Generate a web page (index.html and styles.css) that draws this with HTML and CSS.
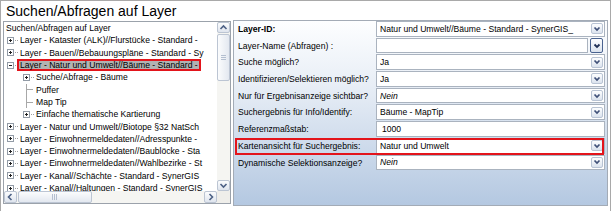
FILE: index.html
```html
<!DOCTYPE html>
<html>
<head>
<meta charset="utf-8">
<title>Suchen/Abfragen auf Layer</title>
<link rel="stylesheet" href="styles.css">
</head>
<body>
<div class="win">
  <div class="title">Suchen/Abfragen auf Layer</div>
  <div class="main">
    <div class="tree">
      <div class="tree-list">
        <div class="node root">Suchen/Abfragen auf Layer</div>
        <div class="node l1"><svg class="exp" width="12" height="7" viewBox="0 0 12 7"><rect x="0.5" y="0.5" width="6" height="6" fill="#fff" stroke="#929ba6"/><rect x="2" y="3" width="3" height="1" fill="#222"/><rect x="3" y="2" width="1" height="3" fill="#222"/><rect x="8" y="3" width="1" height="1" fill="#a0a0a0"/><rect x="10" y="3" width="1" height="1" fill="#a0a0a0"/></svg><span class="tx">Layer - Kataster (ALK)//Flurstücke - Standard -</span></div>
        <div class="node l1"><svg class="exp" width="12" height="7" viewBox="0 0 12 7"><rect x="0.5" y="0.5" width="6" height="6" fill="#fff" stroke="#929ba6"/><rect x="2" y="3" width="3" height="1" fill="#222"/><rect x="3" y="2" width="1" height="3" fill="#222"/><rect x="8" y="3" width="1" height="1" fill="#a0a0a0"/><rect x="10" y="3" width="1" height="1" fill="#a0a0a0"/></svg><span class="tx">Layer - Bauen//Bebauungspläne - Standard - Sy</span></div>
        <div class="node l1"><svg class="exp" width="12" height="7" viewBox="0 0 12 7"><rect x="0.5" y="0.5" width="6" height="6" fill="#fff" stroke="#929ba6"/><rect x="2" y="3" width="3" height="1" fill="#222"/><rect x="8" y="3" width="1" height="1" fill="#a0a0a0"/><rect x="10" y="3" width="1" height="1" fill="#a0a0a0"/></svg><span class="selbox">Layer - Natur und Umwelt//Bäume - Standard -</span></div>
        <div class="node l2"><svg class="exp" width="12" height="7" viewBox="0 0 12 7"><rect x="0.5" y="0.5" width="6" height="6" fill="#fff" stroke="#929ba6"/><rect x="2" y="3" width="3" height="1" fill="#222"/><rect x="3" y="2" width="1" height="3" fill="#222"/><rect x="8" y="3" width="1" height="1" fill="#a0a0a0"/><rect x="10" y="3" width="1" height="1" fill="#a0a0a0"/></svg><span class="tx">Suche/Abfrage - Bäume</span></div>
        <div class="node l2"><span class="ln"></span><span class="tx">Puffer</span></div>
        <div class="node l2"><span class="ln"></span><span class="tx">Map Tip</span></div>
        <div class="node l2"><svg class="exp" width="12" height="7" viewBox="0 0 12 7"><rect x="0.5" y="0.5" width="6" height="6" fill="#fff" stroke="#929ba6"/><rect x="2" y="3" width="3" height="1" fill="#222"/><rect x="3" y="2" width="1" height="3" fill="#222"/><rect x="8" y="3" width="1" height="1" fill="#a0a0a0"/><rect x="10" y="3" width="1" height="1" fill="#a0a0a0"/></svg><span class="tx">Einfache thematische Kartierung</span></div>
        <div class="node l1"><svg class="exp" width="12" height="7" viewBox="0 0 12 7"><rect x="0.5" y="0.5" width="6" height="6" fill="#fff" stroke="#929ba6"/><rect x="2" y="3" width="3" height="1" fill="#222"/><rect x="3" y="2" width="1" height="3" fill="#222"/><rect x="8" y="3" width="1" height="1" fill="#a0a0a0"/><rect x="10" y="3" width="1" height="1" fill="#a0a0a0"/></svg><span class="tx">Layer - Natur und Umwelt//Biotope §32 NatSch</span></div>
        <div class="node l1"><svg class="exp" width="12" height="7" viewBox="0 0 12 7"><rect x="0.5" y="0.5" width="6" height="6" fill="#fff" stroke="#929ba6"/><rect x="2" y="3" width="3" height="1" fill="#222"/><rect x="3" y="2" width="1" height="3" fill="#222"/><rect x="8" y="3" width="1" height="1" fill="#a0a0a0"/><rect x="10" y="3" width="1" height="1" fill="#a0a0a0"/></svg><span class="tx">Layer - Einwohnermeldedaten//Adresspunkte -</span></div>
        <div class="node l1"><svg class="exp" width="12" height="7" viewBox="0 0 12 7"><rect x="0.5" y="0.5" width="6" height="6" fill="#fff" stroke="#929ba6"/><rect x="2" y="3" width="3" height="1" fill="#222"/><rect x="3" y="2" width="1" height="3" fill="#222"/><rect x="8" y="3" width="1" height="1" fill="#a0a0a0"/><rect x="10" y="3" width="1" height="1" fill="#a0a0a0"/></svg><span class="tx">Layer - Einwohnermeldedaten//Baublöcke - Sta</span></div>
        <div class="node l1"><svg class="exp" width="12" height="7" viewBox="0 0 12 7"><rect x="0.5" y="0.5" width="6" height="6" fill="#fff" stroke="#929ba6"/><rect x="2" y="3" width="3" height="1" fill="#222"/><rect x="3" y="2" width="1" height="3" fill="#222"/><rect x="8" y="3" width="1" height="1" fill="#a0a0a0"/><rect x="10" y="3" width="1" height="1" fill="#a0a0a0"/></svg><span class="tx">Layer - Einwohnermeldedaten//Wahlbezirke - St</span></div>
        <div class="node l1"><svg class="exp" width="12" height="7" viewBox="0 0 12 7"><rect x="0.5" y="0.5" width="6" height="6" fill="#fff" stroke="#929ba6"/><rect x="2" y="3" width="3" height="1" fill="#222"/><rect x="3" y="2" width="1" height="3" fill="#222"/><rect x="8" y="3" width="1" height="1" fill="#a0a0a0"/><rect x="10" y="3" width="1" height="1" fill="#a0a0a0"/></svg><span class="tx">Layer - Kanal//Schächte - Standard - SynerGIS</span></div>
        <div class="node l1"><svg class="exp" width="12" height="7" viewBox="0 0 12 7"><rect x="0.5" y="0.5" width="6" height="6" fill="#fff" stroke="#929ba6"/><rect x="2" y="3" width="3" height="1" fill="#222"/><rect x="3" y="2" width="1" height="3" fill="#222"/><rect x="8" y="3" width="1" height="1" fill="#a0a0a0"/><rect x="10" y="3" width="1" height="1" fill="#a0a0a0"/></svg><span class="tx">Layer - Kanal//Haltungen - Standard - SynerGIS</span></div>
      </div>
      <div class="vscroll">
        <div class="sbtn"><svg width="11" height="9" viewBox="0 0 11 9"><polyline points="2.5,6 5.5,3 8.5,6" fill="none" stroke="#4d6185" stroke-width="1.6"/></svg></div>
        <div class="vthumb"><svg width="7" height="6" viewBox="0 0 7 6"><rect x="1" y="0" width="5" height="1" fill="#b4bfd0"/><rect x="1" y="2" width="5" height="1" fill="#b4bfd0"/><rect x="1" y="4" width="5" height="1" fill="#b4bfd0"/></svg></div>
        <div class="strack"></div>
        <div class="sbtn"><svg width="11" height="9" viewBox="0 0 11 9"><polyline points="2.5,3 5.5,6 8.5,3" fill="none" stroke="#4d6185" stroke-width="1.6"/></svg></div>
      </div>
      <div class="hscroll">
        <div class="hbtn"><svg width="11" height="10" viewBox="0 0 11 10"><polyline points="6.5,2 3.5,5 6.5,8" fill="none" stroke="#4d6185" stroke-width="1.6"/></svg></div>
        <div class="hthumb"><svg width="6" height="6" viewBox="0 0 6 6"><rect x="0" y="0" width="1" height="6" fill="#b4bfd0"/><rect x="2" y="0" width="1" height="6" fill="#b4bfd0"/><rect x="4" y="0" width="1" height="6" fill="#b4bfd0"/></svg></div>
        <div class="strack"></div>
        <div class="hbtn"><svg width="11" height="10" viewBox="0 0 11 10"><polyline points="4.5,2 7.5,5 4.5,8" fill="none" stroke="#4d6185" stroke-width="1.6"/></svg></div>
      </div>
      <div class="corner"></div>
    </div>
    <div class="props">
      <div class="prow">
        <div class="plabel bold">Layer-ID:</div>
        <div class="pval"><span class="vt">Natur und Umwelt//Bäume - Standard - SynerGIS_</span><span class="dd"><svg width="8" height="6" viewBox="0 0 8 6"><polyline points="1.5,1.5 4,4 6.5,1.5" fill="none" stroke="#3f5078" stroke-width="1.7"/></svg></span></div>
      </div>
      <div class="prow">
        <div class="plabel">Layer-Name (Abfragen) :</div>
        <div class="pcell"><div class="pval"><span class="vt"></span></div><span class="dd focus"><svg width="8" height="6" viewBox="0 0 8 6"><polyline points="1.5,1.5 4,4 6.5,1.5" fill="none" stroke="#1f2f55" stroke-width="1.8"/></svg></span></div>
      </div>
      <div class="prow">
        <div class="plabel">Suche möglich?</div>
        <div class="pval"><span class="vt">Ja</span><span class="dd"><svg width="8" height="6" viewBox="0 0 8 6"><polyline points="1.5,1.5 4,4 6.5,1.5" fill="none" stroke="#3f5078" stroke-width="1.7"/></svg></span></div>
      </div>
      <div class="prow">
        <div class="plabel">Identifizieren/Selektieren möglich?</div>
        <div class="pval"><span class="vt">Ja</span><span class="dd"><svg width="8" height="6" viewBox="0 0 8 6"><polyline points="1.5,1.5 4,4 6.5,1.5" fill="none" stroke="#3f5078" stroke-width="1.7"/></svg></span></div>
      </div>
      <div class="prow">
        <div class="plabel">Nur für Ergebnisanzeige sichtbar?</div>
        <div class="pval"><span class="vt it">Nein</span><span class="dd"><svg width="8" height="6" viewBox="0 0 8 6"><polyline points="1.5,1.5 4,4 6.5,1.5" fill="none" stroke="#3f5078" stroke-width="1.7"/></svg></span></div>
      </div>
      <div class="prow">
        <div class="plabel">Suchergebnis für Info/Identify:</div>
        <div class="pval"><span class="vt">Bäume - MapTip</span><span class="dd"><svg width="8" height="6" viewBox="0 0 8 6"><polyline points="1.5,1.5 4,4 6.5,1.5" fill="none" stroke="#3f5078" stroke-width="1.7"/></svg></span></div>
      </div>
      <div class="prow">
        <div class="plabel">Referenzmaßstab:</div>
        <div class="pval plain"><span class="vt">1000</span></div>
      </div>
      <div class="prow hl">
        <div class="plabel">Kartenansicht für Suchergebnis:</div>
        <div class="pval"><span class="vt">Natur und Umwelt</span><span class="dd"><svg width="8" height="6" viewBox="0 0 8 6"><polyline points="1.5,1.5 4,4 6.5,1.5" fill="none" stroke="#3f5078" stroke-width="1.7"/></svg></span></div>
      </div>
      <div class="prow">
        <div class="plabel">Dynamische Selektionsanzeige?</div>
        <div class="pval"><span class="vt it">Nein</span><span class="dd"><svg width="8" height="6" viewBox="0 0 8 6"><polyline points="1.5,1.5 4,4 6.5,1.5" fill="none" stroke="#3f5078" stroke-width="1.7"/></svg></span></div>
      </div>
    </div>
  </div>
</div>
</body>
</html>
```

FILE: styles.css
```css
* { box-sizing: border-box; }
html, body { margin: 0; padding: 0; }
body {
  width: 612px;
  height: 211px;
  overflow: hidden;
  background: #fff;
  font-family: "Liberation Sans", Arial, sans-serif;
  font-size: 8.6px;
  color: #000;
}
.win {
  width: 611px;
  height: 211px;
  border: 1px solid #a9a9a9;
  border-bottom: none;
}
.title {
  height: 19px;
  padding: 1px 0 0 5px;
  font-size: 14px;
  line-height: 18px;
  white-space: nowrap;
}
.main {
  display: flex;
  align-items: flex-start;
  gap: 2px;
  padding-left: 2px;
}

/* tree */
.tree {
  margin-top: 1px;
  width: 228px;
  height: 183px;
  border: 1px solid #9ba2ab;
  display: grid;
  grid-template-columns: 213px 13px;
  grid-template-rows: 169px 12px;
  background: #fff;
}
.tree-list {
  overflow: hidden;
  white-space: nowrap;
  padding-right: 6px;
}
.node {
  height: 12.32px;
  line-height: 12.32px;
  display: flex;
  align-items: center;
  white-space: nowrap;
  overflow: hidden;
}
.node.root { padding-left: 2px; }
.node.l1 { padding-left: 3px; }
.node.l2 { padding-left: 19px; }
.exp { flex: none; margin-right: 1px; display: block; }
.tx { flex: none; }
.ln {
  flex: none;
  width: 13px;
  align-self: stretch;
  background:
    linear-gradient(#a8a8a8, #a8a8a8) 3px 0 / 1px 100% no-repeat,
    linear-gradient(#a8a8a8, #a8a8a8) 3px 50% / 7px 1px no-repeat;
}
.selbox {
  flex: none;
  display: inline-block;
  margin-left: -3px;
  height: 12px;
  line-height: 8px;
  padding: 0 1px;
  border: 2px solid #e3141b;
  background: #b2b2b2;
}

/* scrollbars */
.vscroll {
  display: flex;
  flex-direction: column;
  background: #f5f5f2;
  padding: 0;
}
.sbtn {
  flex: none;
  height: 11px;
  width: 13px;
  border: 1px solid #bcc5d3;
  border-radius: 2px;
  background: linear-gradient(#fbfcfd, #dfe5ee);
  display: flex;
  align-items: center;
  justify-content: center;
}
.vthumb {
  flex: none;
  height: 47px;
  width: 13px;
  margin-top: 1px;
  border: 1px solid #bcc5d3;
  border-radius: 2px;
  background: linear-gradient(90deg, #fbfcfd, #e3e8f0);
  display: flex;
  align-items: center;
  justify-content: center;
}
.strack { flex: 1; }
.hscroll {
  display: flex;
  background: #f5f5f2;
}
.hbtn {
  flex: none;
  width: 13px;
  height: 12px;
  border: 1px solid #bcc5d3;
  border-radius: 2px;
  background: linear-gradient(#fbfcfd, #dfe5ee);
  display: flex;
  align-items: center;
  justify-content: center;
}
.hthumb {
  flex: none;
  width: 74px;
  height: 12px;
  margin-left: 1px;
  border: 1px solid #bcc5d3;
  border-radius: 2px;
  background: linear-gradient(#fbfcfd, #e3e8f0);
  display: flex;
  align-items: center;
  justify-content: center;
}
.corner { background: #efeeea; }

/* property grid */
.props {
  width: 375px;
  height: 186px;
  border: 1px solid #a3abb6;
  background: linear-gradient(#fdfeff 0%, #e8eef6 35%, #b4c8e1 100%);
}
.prow {
  position: relative;
  display: grid;
  grid-template-columns: 142px 1fr;
  height: 16.7px;
}
.plabel {
  padding-left: 4px;
  line-height: 16.7px;
  white-space: nowrap;
  overflow: hidden;
}
.plabel.bold { font-weight: bold; }
.pval {
  margin-right: 2px;
  height: calc(100% - 1px);
  border: 1px solid #aab3bf;
  background: #fff;
  display: flex;
  align-items: center;
  padding-left: 3px;
  min-width: 0;
}
.pval.plain { padding-left: 5px; }
.vt {
  flex: 1;
  white-space: nowrap;
  overflow: hidden;
}
.vt.it { font-style: italic; }
.dd {
  flex: none;
  width: 12px;
  height: 11px;
  margin-right: 1px;
  border: 1px solid #b9c4d4;
  border-radius: 2px;
  background: linear-gradient(#fdfeff, #dbe3ee);
  display: flex;
  align-items: center;
  justify-content: center;
}
.pcell {
  display: flex;
  margin-right: 4px;
  height: calc(100% - 1px);
}
.pcell .pval {
  flex: 1;
  height: 100%;
  margin-right: 2px;
}
.dd.focus {
  width: 13px;
  height: 100%;
  margin-right: 0;
  border-color: #4a6390;
}
.prow.hl::after {
  content: "";
  position: absolute;
  left: 1px;
  right: 3px;
  top: 0;
  bottom: 0;
  border: 2px solid #e3141b;
}
```
